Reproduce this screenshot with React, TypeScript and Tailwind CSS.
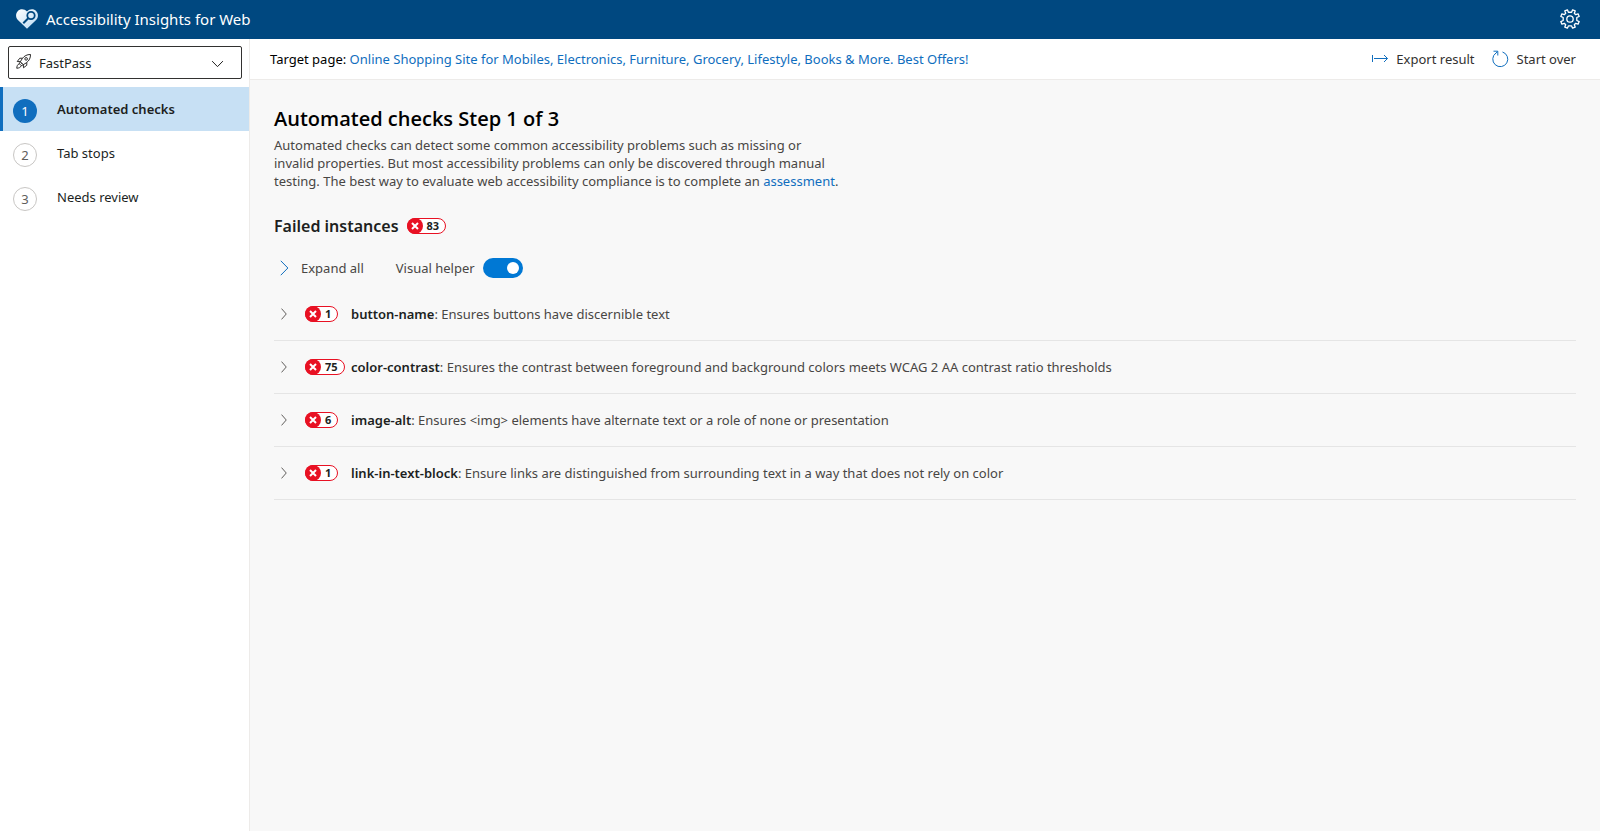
import React, { useState } from "react";

type Step = { number: number; label: string };
type Rule = { id: string; count: number; description: string };

const steps: Step[] = [
  { number: 1, label: "Automated checks" },
  { number: 2, label: "Tab stops" },
  { number: 3, label: "Needs review" },
];

const rules: Rule[] = [
  { id: "button-name", count: 1, description: "Ensures buttons have discernible text" },
  {
    id: "color-contrast",
    count: 75,
    description:
      "Ensures the contrast between foreground and background colors meets WCAG 2 AA contrast ratio thresholds",
  },
  {
    id: "image-alt",
    count: 6,
    description: "Ensures <img> elements have alternate text or a role of none or presentation",
  },
  {
    id: "link-in-text-block",
    count: 1,
    description:
      "Ensure links are distinguished from surrounding text in a way that does not rely on color",
  },
];

function Logo() {
  return (
    <svg className="h-5 w-[22px] shrink-0" viewBox="0 0 22 20" aria-hidden="true">
      <defs>
        <linearGradient id="heart" x1="0" y1="0" x2="1" y2="1">
          <stop offset="0" stopColor="#ffffff" />
          <stop offset="1" stopColor="#b9d9f3" />
        </linearGradient>
      </defs>
      <path
        d="M11 19.8 1.900 10.900C-.5 8.500-.5 4.500 1.700 2.200 4.100-.3 8.300-.4 11 2.600 13.700-.4 17.900-.3 20.300 2.200c2.200 2.300 2.200 6.300-.2 8.700z"
        fill="url(#heart)"
      />
      <circle cx="15" cy="6.500" r="3.700" fill="none" stroke="#004880" strokeWidth="1.800" />
      <path d="m12.300 9.200-5 5" stroke="#004880" strokeWidth="2" />
    </svg>
  );
}

function GearIcon() {
  return (
    <svg
      className="size-5"
      viewBox="-10 -10 20 20"
      fill="none"
      stroke="currentColor"
      strokeWidth="1.300"
      strokeLinejoin="round"
      aria-hidden="true"
    >
      <circle r="3.200" />
      <path d="M0-6.800 1.600-6.700 2.600-9.200 5.200-8.100 4.300-5.700 5.700-4.300 8.100-5.200 9.200-2.600 6.800-1.500V1.500L9.200 2.600 8.100 5.200 5.700 4.300 4.300 5.700 5.200 8.100 2.600 9.200 1.500 6.800H-1.500L-2.600 9.200-5.200 8.100-4.300 5.700-5.700 4.300-8.100 5.200-9.200 2.600-6.800 1.500V-1.500L-9.200-2.600-8.100-5.200-5.700-4.300-4.300-5.700-5.200-8.100-2.600-9.200-1.600-6.700z" />
    </svg>
  );
}

function RocketIcon() {
  return (
    <svg
      className="pointer-events-none absolute left-2 top-2 size-[15px]"
      viewBox="0 0 16 16"
      fill="none"
      stroke="#201f1e"
      strokeWidth="1"
      strokeLinejoin="round"
      aria-hidden="true"
    >
      <path d="M15.500.5c-3.800 0-6.500 1.400-8.700 4.200L4.600 8.200l3.200 3.200 3.500-2.200c2.800-2.200 4.200-4.900 4.200-8.700z" />
      <path d="M7 4.500H4L1.300 8l3.500.2M11.500 9v3L8 14.700l-.2-3.500M4.600 8.200l-1 2.200 2 2 2.200-1" />
      <circle cx="10.800" cy="5.200" r="1.400" />
      <path d="M3.500 10.500C1.500 11 1 13 .8 15.200c2.200-.2 4.200-.7 4.700-2.700M5.500 9.500l1.200 1.200" />
    </svg>
  );
}

function Chevron({ className }: { className: string }) {
  return (
    <svg
      className={className}
      viewBox="0 0 8 14"
      fill="none"
      stroke="currentColor"
      strokeWidth="1"
      aria-hidden="true"
      preserveAspectRatio="none"
    >
      <path d="m.7.7 6.300 6.300L.7 13.300" vectorEffect="non-scaling-stroke" />
    </svg>
  );
}

function ExportIcon() {
  return (
    <svg className="h-4 w-4" viewBox="0 0 16 16" fill="none" stroke="#106ebe" aria-hidden="true">
      <path d="M.5 4v7M2 7.500h13.500M12 4l3.500 3.500L12 11" />
    </svg>
  );
}

function RestartIcon() {
  return (
    <svg className="size-[18px]" viewBox="0 0 18 18" fill="none" stroke="#106ebe" aria-hidden="true">
      <path d="M11.500 2A7.500 7.500 0 1 1 5 3L6.500 1.700M2.500 1.200h4.300v4.300" />
    </svg>
  );
}

function FailedCount({ count }: { count: number }) {
  return (
    <span className="inline-flex h-4 items-center rounded-full border border-[#e81123] bg-white pr-1.5 text-[11px] leading-none font-bold text-[#201f1e]">
      <span className="-my-px -ml-px mr-1 flex size-4 items-center justify-center rounded-full bg-[#e81123]">
        <svg className="size-2" viewBox="0 0 8 8" stroke="#ffffff" strokeWidth="2" aria-hidden="true">
          <path d="m1 1 6 6M7 1 1 7" />
        </svg>
      </span>
      <span className="pb-px">{count}</span>
    </span>
  );
}

function StepLink({ step, active, onSelect }: { step: Step; active: boolean; onSelect: () => void }) {
  return (
    <li>
      <button
        type="button"
        aria-current={active ? "step" : undefined}
        onClick={onSelect}
        className={
          active
            ? "flex h-11 w-full items-center gap-5 border-l-[3px] border-[#106ebe] bg-[#c7e0f4] pl-[10px] text-left font-semibold"
            : "flex h-11 w-full items-center gap-5 border-l-[3px] border-transparent pl-[10px] text-left"
        }
      >
        <span
          className={
            active
              ? "mt-1 flex size-6 items-center justify-center rounded-full bg-[#106ebe] font-normal text-white"
              : "mt-1 flex size-6 items-center justify-center rounded-full border border-[#c8c6c4] bg-white text-[#605e5c]"
          }
        >
          {step.number}
        </span>
        {step.label}
      </button>
    </li>
  );
}

export default function App() {
  const [current, setCurrent] = useState(1);
  const [helper, setHelper] = useState(true);
  const [open, setOpen] = useState<string[]>([]);
  const allOpen = open.length === rules.length;

  const toggle = (id: string) =>
    setOpen(open.includes(id) ? open.filter((o) => o !== id) : [...open, id]);

  return (
    <div className="flex min-h-screen flex-col bg-[#f8f8f8] font-['Noto_Sans','Open_Sans',sans-serif] text-[13px] leading-[18px] text-[#201f1e]">
      <header className="flex h-[39px] items-center justify-between bg-[#004880] pr-5 pb-px pl-4 text-white">
        <div className="flex items-center gap-2">
          <Logo />
          <span className="text-[15px]">Accessibility Insights for Web</span>
        </div>
        <button type="button" aria-label="Settings">
          <GearIcon />
        </button>
      </header>

      <div className="flex grow">
        <aside className="w-[250px] shrink-0 border-r border-[#edebe9] bg-white">
          <div className="mr-[7px] mb-2 ml-2 pt-[7px]">
            <div className="relative">
              <RocketIcon />
              <select
                aria-label="Assessment type"
                className="block h-[33px] w-full appearance-none rounded-xs border border-[#323130] bg-transparent pl-[30px]"
              >
                <option>FastPass</option>
              </select>
              <Chevron className="pointer-events-none absolute top-3 right-[21px] h-3 w-[7px] rotate-90" />
            </div>
          </div>
          <nav aria-label="FastPass steps">
            <ul>
              {steps.map((step) => (
                <StepLink
                  key={step.number}
                  step={step}
                  active={step.number === current}
                  onSelect={() => setCurrent(step.number)}
                />
              ))}
            </ul>
          </nav>
        </aside>

        <div className="flex min-w-0 grow flex-col">
          <div className="flex min-h-[41px] items-center justify-between gap-6 border-b border-[#edebe9] bg-white pr-6 pl-5">
            <p>
              <span className="text-black">Target page: </span>
              <a href="#target" className="text-[#106ebe]">
                Online Shopping Site for Mobiles, Electronics, Furniture, Grocery, Lifestyle, Books &amp; More.
                Best Offers!
              </a>
            </p>
            <div className="flex shrink-0 gap-4 text-[#323130]">
              <button type="button" className="flex items-center gap-2">
                <ExportIcon />
                Export result
              </button>
              <button type="button" className="flex items-center gap-2">
                <RestartIcon />
                Start over
              </button>
            </div>
          </div>

          <main className="px-6 pt-6">
            <h1 className="font-['Open_Sans','Noto_Sans',sans-serif] text-[20px] leading-[30px] font-semibold text-black">
              Automated checks Step 1 of 3
            </h1>
            <p className="mt-0.5 max-w-[568px] text-[#484644]">
              Automated checks can detect some common accessibility problems such as missing or invalid
              properties. But most accessibility problems can only be discovered through manual testing. The
              best way to evaluate web accessibility compliance is to complete an{" "}
              <a href="#assessment" className="text-[#106ebe]">
                assessment
              </a>
              .
            </p>

            <div className="mt-6 flex items-center gap-2">
              <h2 className="text-[16px] leading-6 font-semibold">Failed instances</h2>
              <FailedCount count={83} />
            </div>

            <div className="mt-[14px] flex h-8 items-center gap-8 text-[#484644]">
              <button
                type="button"
                className="flex items-center gap-3 pl-1.5"
                onClick={() => setOpen(allOpen ? [] : rules.map((r) => r.id))}
              >
                <Chevron className="h-4 w-[9px] text-[#106ebe]" />
                Expand all
              </button>
              <label className="flex items-center gap-2">
                Visual helper
                <input
                  type="checkbox"
                  role="switch"
                  checked={helper}
                  onChange={(e) => setHelper(e.target.checked)}
                  className="flex h-5 w-10 appearance-none items-center rounded-full bg-[#8a8886] px-1 before:size-3 before:rounded-full before:bg-white checked:justify-end checked:bg-[#0078d4]"
                />
              </label>
            </div>

            <ul className="mt-1">
              {rules.map((rule) => (
                <li key={rule.id} className="border-b border-[#e5e5e5]">
                  <button
                    type="button"
                    aria-expanded={open.includes(rule.id)}
                    onClick={() => toggle(rule.id)}
                    className="flex min-h-[52px] w-full items-center pl-[7px] text-left"
                  >
                    <Chevron className="mr-[18px] h-3 w-[6px] shrink-0 text-[#605e5c]" />
                    <span className="flex w-[46px] shrink-0">
                      <FailedCount count={rule.count} />
                    </span>
                    <span className="text-[#484644]">
                      <strong className="font-semibold text-[#201f1e]">{rule.id}</strong>: {rule.description}
                    </span>
                  </button>
                </li>
              ))}
            </ul>
          </main>
        </div>
      </div>
    </div>
  );
}
